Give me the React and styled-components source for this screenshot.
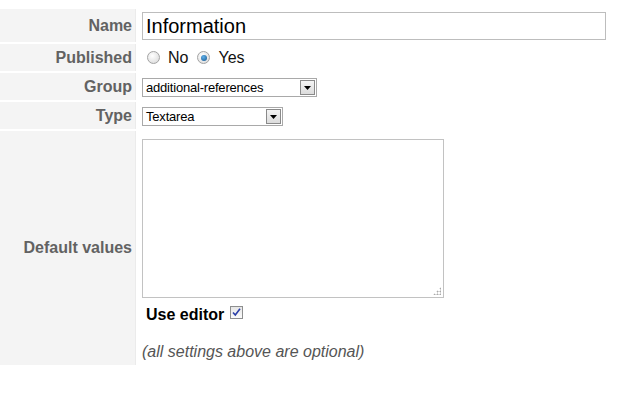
import React from "react";
import styled, { createGlobalStyle } from "styled-components";

const Global = createGlobalStyle`
  html, body {
    margin: 0;
    padding: 0;
    background: #ffffff;
    font-family: "Liberation Sans", Arial, sans-serif;
  }
`;

function Radio({ checked, label }) {
  return (
    <RadioLabel>
      <RadioDot checked={checked} />
      {label}
    </RadioLabel>
  );
}

function Select({ value, width }) {
  return (
    <SelectBox width={width}>
      <SelectValue>{value}</SelectValue>
      <SelectArrow>
        <svg width="7" height="4" viewBox="0 0 7 4">
          <path d="M0 0h7L3.5 4z" fill="#000" />
        </svg>
      </SelectArrow>
    </SelectBox>
  );
}

export default function App() {
  return (
    <>
      <Global />
      <Form>
        <Label height={33}>Name</Label>
        <Field top={3}>
          <TextInput defaultValue="Information" />
        </Field>

        <Label height={27}>Published</Label>
        <Field top={0} center>
          <Radio label="No" />
          <Radio checked label="Yes" />
        </Field>

        <Label height={27}>Group</Label>
        <Field top={5}>
          <Select value="additional-references" width={175} />
        </Field>

        <Label height={27}>Type</Label>
        <Field top={5}>
          <Select value="Textarea" width={141} />
        </Field>

        <Label height={234}>Default values</Label>
        <Field top={8}>
          <TextArea />
          <EditorRow>
            Use editor
            <CheckBox>
              <svg width="9" height="9" viewBox="0 0 9 9">
                <path d="M1 4.5l2.3 2.6L8 0.8" fill="none" stroke="#2b3fa8" strokeWidth="1.6" />
              </svg>
            </CheckBox>
          </EditorRow>
          <Note>(all settings above are optional)</Note>
        </Field>
      </Form>
    </>
  );
}

const Form = styled.div`
  display: grid;
  grid-template-columns: 136px 1fr;
  column-gap: 1px;
  row-gap: 2px;
  margin-top: 9px;
  width: 641px;
`;

const Label = styled.div`
  height: ${(p) => p.height}px;
  background: #f4f4f4;
  border-right: 1px solid #ebebeb;
  display: flex;
  align-items: center;
  justify-content: flex-end;
  padding-right: 3px;
  box-sizing: border-box;
  font-size: 16px;
  font-weight: bold;
  color: #626262;
`;

const Field = styled.div`
  padding: ${(p) => p.top}px 0 0 5px;
  display: flex;
  flex-direction: ${(p) => (p.center ? "row" : "column")};
  align-items: ${(p) => (p.center ? "center" : "flex-start")};
`;

const TextInput = styled.input`
  width: 464px;
  height: 28px;
  box-sizing: border-box;
  border: 1px solid #bdbdbd;
  padding: 0 3px;
  margin: 0;
  font-family: "Liberation Sans", Arial, sans-serif;
  font-size: 20px;
  color: #000;
  outline: none;
`;

const RadioLabel = styled.label`
  display: flex;
  align-items: center;
  font-size: 16px;
  color: #111;
  margin-right: 9px;
  &:first-child {
    margin-left: 5px;
  }
`;

const RadioDot = styled.span`
  width: 11px;
  height: 11px;
  border-radius: 50%;
  border: 1px solid #a3a3a3;
  background: radial-gradient(circle at 40% 35%, #ffffff 0%, #d6d6d6 100%);
  margin-right: 8px;
  position: relative;
  &::after {
    content: "";
    display: ${(p) => (p.checked ? "block" : "none")};
    position: absolute;
    left: 2.5px;
    top: 2.5px;
    width: 6px;
    height: 6px;
    border-radius: 50%;
    background: radial-gradient(circle at 40% 35%, #5fb0ea 0%, #14548c 100%);
  }
`;

const SelectBox = styled.div`
  width: ${(p) => p.width}px;
  height: 19px;
  box-sizing: border-box;
  border: 1px solid #a9a9a9;
  background: #fff;
  display: flex;
  align-items: center;
  justify-content: space-between;
  padding: 0 1px 0 3px;
`;

const SelectValue = styled.span`
  font-size: 13px;
  color: #000;
  letter-spacing: -0.2px;
`;

const SelectArrow = styled.span`
  width: 15px;
  height: 15px;
  box-sizing: border-box;
  border: 1px solid #8a8a8a;
  background: linear-gradient(#f4f4f4, #dcdcdc);
  display: flex;
  align-items: center;
  justify-content: center;
`;

const TextArea = styled.div`
  width: 302px;
  height: 159px;
  box-sizing: border-box;
  border: 1px solid #c2c2c2;
  background: #fff;
  position: relative;
  &::after {
    content: "";
    position: absolute;
    right: 2px;
    bottom: 2px;
    width: 8px;
    height: 8px;
    background:
      radial-gradient(circle, #aaa 0.8px, transparent 1.2px) 0 0 / 3px 3px;
    clip-path: polygon(100% 0, 100% 100%, 0 100%);
  }
`;

const EditorRow = styled.div`
  display: flex;
  align-items: center;
  margin: 8px 0 0 4px;
  font-size: 16px;
  font-weight: bold;
  color: #000;
`;

const CheckBox = styled.span`
  width: 13px;
  height: 13px;
  box-sizing: border-box;
  border: 1px solid #8e8f8f;
  background: linear-gradient(#e6e6e6, #fbfbfb);
  margin-left: 6px;
  margin-top: -5px;
  display: flex;
  align-items: center;
  justify-content: center;
`;

const Note = styled.div`
  margin-top: 19px;
  font-size: 16px;
  font-style: italic;
  color: #555;
`;
